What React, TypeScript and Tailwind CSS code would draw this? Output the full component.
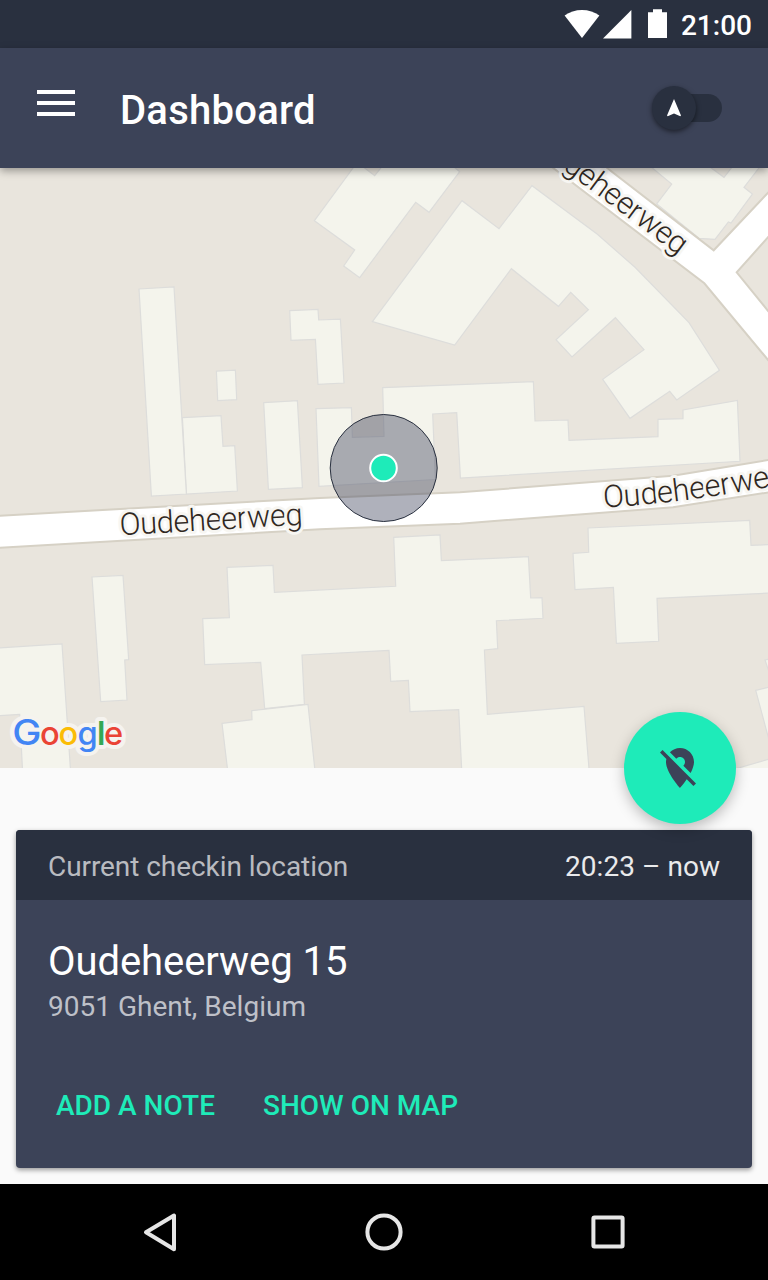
import React from "react";

const buildings = [
  "314.7,220.7 355,250 344,266 360,277.7 416,202.3 429.3,212.3 460,171.7 452,165 383.5,165 375,175.7 361,165 355.5,165",
  "372.7,321.7 462.3,200.7 499.3,228.7 532.3,185.7 597.7,234.3 635.3,267.3 689.3,322.7 719.7,370.3 677,400 670,391.3 630.3,418.3 603,379.3 644.3,349.7 615.7,317.7 572.3,357 556.3,339.7 588.7,309.7 571,292.3 558.7,306.3 511.7,268.7 455,345",
  "649,165 672,184 657,204 699.3,238.3 715.3,239.3 728.7,222 731.3,223 752.7,194 744.3,187.3 761.5,165 734,165 724.3,177.3 707.5,165",
  "182.7,417.7 221.3,415.7 223.3,446.3 235,445.7 237.7,491 186.7,494",
  "139.3,289 174.3,287 186.7,494 151.7,496",
  "216.7,371.2 235.7,370.2 237,399.7 218,400.7",
  "264,402.7 297.7,400.7 302.7,487.7 268.7,489.3",
  "290,310.7 318.3,309.3 319,320 340.7,319.2 344.3,383 318.3,384.3 315.7,339.3 291.3,340.3",
  "316.3,408.7 351.7,407.7 352.7,437.3 384.3,436.3 383,387.7 533.7,381.7 535.3,421 568.3,420 569.3,440.3 658.3,436.7 658.3,419.3 683.3,418.7 683.3,410 737.7,400.5 740.3,461.3 460.7,478 457,412.7 433,414 435.7,479.5 319.3,486.3",
  "92.3,577 123.3,575.3 129,659.7 125,660 127.3,700 101,701.7",
  "-2,648 62.3,644 70.8,770 22.8,770 20,714.3 -2,715.7",
  "227.3,567.3 273.3,565.3 274.7,592.3 396,586.3 394,537.3 440.3,535 441.7,560.7 528.7,556.7 531,598 542.3,597.7 543.3,618.3 496.7,620.7 498,648.7 484.7,650 487.7,714.3 584.3,706.3 589.4,770 462,770 459,709.7 410.3,711.7 408.7,680.3 391,681.3 389.3,650.3 302.3,655 304.7,704.3 265,708.7 261,662.3 205,664.7 203,618.7 229.7,617.7",
  "222.3,723.3 252.3,719.7 252,710.7 308.3,704.5 315.2,770 227.9,770",
  "588.3,528 750,520.5 751.3,545.3 772,544.5 772,593 657.3,598.3 659,641.3 616.7,643.3 613.7,587.3 575.3,589.7 573.3,553.3 589,552.3",
  "765.3,660 772,658.5 772,680",
  "756,690.3 772,686.5 772,750",
  "732,770 772,758.3 772,770",
];

const logo = [
  { ch: "G", x: 12.3, color: "#4285f4", size: 35.5, weight: 500, stretch: 1.1 },
  { ch: "o", x: 39.9, color: "#ea4335", size: 32, weight: 500, stretch: 1.02 },
  { ch: "o", x: 58.6, color: "#fbbc05", size: 32, weight: 500, stretch: 1.02 },
  { ch: "g", x: 77.4, color: "#4285f4", size: 32, weight: 500, stretch: 1.02 },
  { ch: "l", x: 96.9, color: "#34a853", size: 32, weight: 600, stretch: 1 },
  { ch: "e", x: 103.9, color: "#ea4335", size: 32, weight: 500, stretch: 1.02 },
];

function StatusBar() {
  return (
    <div className="flex h-12 items-center justify-end bg-[#29303f] pr-4">
      <svg width="108" height="48" viewBox="562 0 108 48" fill="#fff">
        <path d="M564.6 15.6C574 8 590 8 599.4 15.6L582 38Z" />
        <path d="M631.4 10V38.4H603Z" />
        <path d="M653 9.3h9v3h5V38h-19V12.300h5Z" />
      </svg>
      <span className="ml-[11px] pt-[3px] text-[28px] leading-8 font-medium text-white">21:00</span>
    </div>
  );
}

function AppBar() {
  return (
    <header className="relative z-10 flex h-[120px] items-center bg-[#3c4358] shadow-[0_3px_8px_rgba(0,0,0,0.35)]">
      <button className="ml-[37px] mb-[9px] flex h-[27px] w-[38px] flex-col gap-[7px]" aria-label="Menu">
        <span className="h-1 w-full shrink-0 bg-white" />
        <span className="h-1 w-full shrink-0 bg-white" />
        <span className="h-1 w-full shrink-0 bg-white" />
      </button>
      <h1 className="ml-[45px] grow pt-[6px] text-[40px] leading-[48px] font-medium tracking-[0.25px] text-white">Dashboard</h1>
      <div className="mr-[46px] flex h-7 w-[70px] items-center rounded-full bg-[linear-gradient(to_right,transparent_22px,#29303f_22px)]">
        <div className="flex h-11 w-11 items-center justify-center rounded-full bg-[#29303f] shadow-[0_2px_5px_rgba(0,0,0,0.5)]">
          <svg width="14" height="18" viewBox="0 0 14 18" fill="#fff">
            <path d="M7 0L14 16.500L13.300 17.200L7 14.400L.7 17.200L0 16.500Z" />
          </svg>
        </div>
      </div>
    </header>
  );
}

function StreetMap() {
  return (
    <svg
      className="block h-[600px] w-full shrink-0"
      viewBox="0 168 768 600"
      fontFamily="Roboto, sans-serif"
    >
      <rect y="168" width="768" height="600" fill="#e9e5dd" />
      <g fill="#f4f4ec" stroke="#dddddb" strokeWidth="1.2" transform="translate(-0.3 0)">
        {buildings.map((p, i) => (
          <polygon key={i} points={p} />
        ))}
      </g>
      <g fill="#fff" stroke="#d6d1c5" strokeWidth="2">
        <path d="M-3 515.8L283 500L320 497.900L460 492.300L673 475.700L771 459.500V492L673 507.300L460 523.700L320 529.300L-3 548Z" />
        <path d="M544 161L704.3 283.300L771 363.500V314.500L736.700 272.300L771 234V189.500L713.700 250.300L598 161Z" />
      </g>
      <g
        fill="#30281f"
        stroke="#f7f6f2"
        strokeWidth="6"
        strokeLinejoin="round"
        paintOrder="stroke"
        fontSize="31"
        fontWeight="300"
      >
        <path id="street-west" d="M120.200 535.300L340 522.500" fill="none" stroke="none" />
        <path id="street-east" d="M604 507.500Q690 503 800 481" fill="none" stroke="none" />
        <path id="street-north" d="M562 168.500L722 288" fill="none" stroke="none" />
        <text letterSpacing="-0.45">
          <textPath href="#street-west">Oudeheerweg</textPath>
        </text>
        <text letterSpacing="-0.25">
          <textPath href="#street-east">Oudeheerwe</textPath>
        </text>
        <text letterSpacing="-0.55">
          <textPath href="#street-north">geheerweg</textPath>
        </text>
      </g>
      <circle cx="383.7" cy="468" r="53.500" fill="#3c4159" fillOpacity="0.41" stroke="#29303f" strokeWidth="1" />
      <circle cx="383.500" cy="468" r="13.300" fill="#1eebb9" stroke="#fff" strokeWidth="2" />
      <g fontFamily="Inter, sans-serif">
        {logo.map((l, i) => (
          <text
            key={i}
            transform={`translate(${l.x} 744.6) scale(${l.stretch} 1)`}
            fontSize={l.size}
            fontWeight={l.weight}
            fill="#f5f3ef"
            stroke="#f5f3ef"
            strokeWidth="8"
            strokeLinejoin="round"
          >
            {l.ch}
          </text>
        ))}
        {logo.map((l, i) => (
          <text
            key={i}
            transform={`translate(${l.x} 744.6) scale(${l.stretch} 1)`}
            fontSize={l.size}
            fontWeight={l.weight}
            fill={l.color}
          >
            {l.ch}
          </text>
        ))}
      </g>
    </svg>
  );
}

function CheckinCard() {
  return (
    <section className="flex h-[338px] flex-col overflow-hidden rounded bg-[#3c4358] shadow-[0_2px_5px_rgba(0,0,0,0.4)]">
      <div className="flex h-[70px] items-center justify-between bg-[#29303f] px-8 pt-[3px] text-[28px] leading-8">
        <span className="tracking-[-0.07px] text-[#b9bbc0]">Current checkin location</span>
        <span className="tracking-[0.05px] text-[#e9eaec]">20:23 – now</span>
      </div>
      <div className="px-8 pt-[38px]">
        <h2 className="text-[40px] leading-[48px] tracking-[-0.07px] text-white">Oudeheerweg 15</h2>
        <p className="mt-[5px] text-[28px] leading-8 text-[#bec0c8]">9051 Ghent, Belgium</p>
      </div>
      <div className="mt-[67px] flex gap-12 pl-10 text-[28px] leading-8 font-medium text-[#1eebb9]">
        <button>ADD A NOTE</button>
        <button>SHOW ON MAP</button>
      </div>
    </section>
  );
}

function NavBar() {
  return (
    <nav className="flex h-24 shrink-0 items-center justify-between bg-black px-[136px]">
      <svg width="48" height="48" viewBox="136 1208 48 48" fill="none" stroke="#e6e6e6" strokeWidth="4" strokeLinejoin="round">
        <path d="M146 1232.300L174 1215.500V1249.200Z" />
      </svg>
      <svg width="48" height="48" viewBox="0 0 48 48" fill="none" stroke="#e6e6e6" strokeWidth="4">
        <circle cx="24" cy="24" r="16.600" />
      </svg>
      <svg width="48" height="48" viewBox="0 0 48 48" fill="none" stroke="#e6e6e6" strokeWidth="4">
        <rect x="9.400" y="9.400" width="29.200" height="29.200" rx="1" />
      </svg>
    </nav>
  );
}

export default function App() {
  return (
    <div className="flex h-[1280px] w-[768px] flex-col overflow-hidden bg-[#fafafa] font-['Roboto',sans-serif]">
      <StatusBar />
      <AppBar />
      <main className="relative flex grow flex-col">
        <StreetMap />
        <div className="px-4 pt-[62px]">
          <CheckinCard />
        </div>
        <button
          aria-label="Check out"
          className="absolute top-[544px] right-8 flex h-28 w-28 items-center justify-center rounded-full bg-[#1eebb9] shadow-[0_5px_14px_rgba(0,0,0,0.25)]"
        >
          <svg width="48" height="48" viewBox="0 0 24 24" fill="#3c4358">
            <path d="M12 6.500c1.380 0 2.500 1.120 2.500 2.500 0 .74-.33 1.390-.83 1.850l3.630 3.630c.98-1.860 1.700-3.800 1.700-5.480 0-3.870-3.130-7-7-7-1.980 0-3.760.83-5.040 2.150l3.190 3.190c.46-.52 1.110-.84 1.850-.84zm4.370 9.600l-4.630-4.630-.11-.11L3.270 3 2 4.270l3.180 3.180C5.070 7.950 5 8.470 5 9c0 5.250 7 13 7 13s1.670-1.850 3.380-4.350L18.730 21 20 19.730l-3.630-3.630z" />
          </svg>
        </button>
      </main>
      <NavBar />
    </div>
  );
}
